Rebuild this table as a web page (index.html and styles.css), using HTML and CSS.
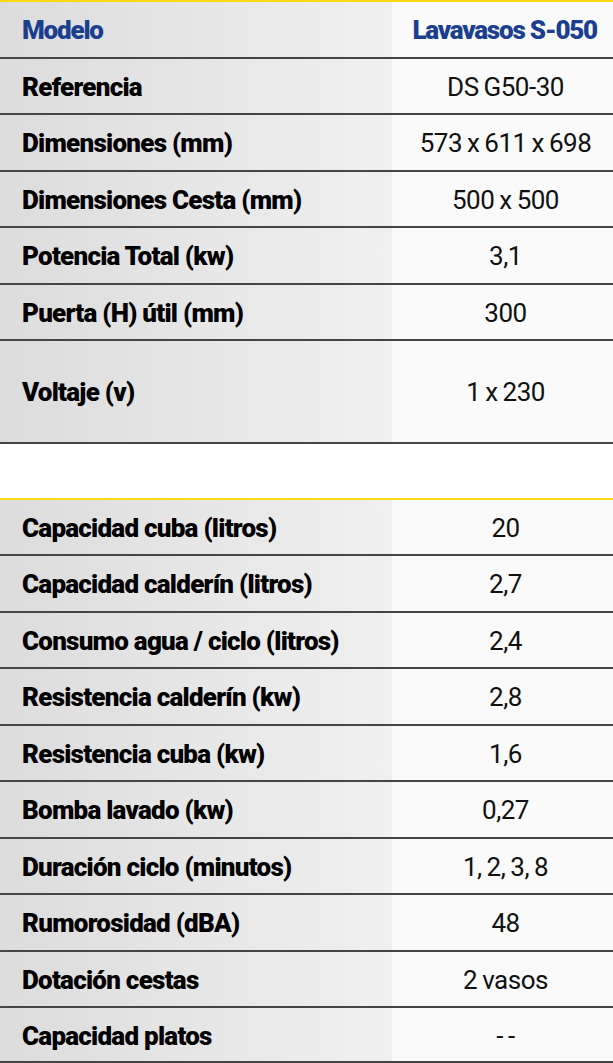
FILE: index.html
```html
<!DOCTYPE html>
<html lang="es">
<head>
<meta charset="utf-8">
<title>Lavavasos S-050</title>
<link rel="stylesheet" href="styles.css">
</head>
<body>
<div class="spec">
  <div class="row head yellow">
    <div class="label">Modelo</div>
    <div class="value">Lavavasos S-050</div>
  </div>
  <div class="row">
    <div class="label">Referencia</div>
    <div class="value">DS G50-30</div>
  </div>
  <div class="row">
    <div class="label">Dimensiones (mm)</div>
    <div class="value">573 x 611 x 698</div>
  </div>
  <div class="row">
    <div class="label">Dimensiones Cesta (mm)</div>
    <div class="value">500 x 500</div>
  </div>
  <div class="row">
    <div class="label">Potencia Total (kw)</div>
    <div class="value">3,1</div>
  </div>
  <div class="row">
    <div class="label">Puerta (H) útil (mm)</div>
    <div class="value">300</div>
  </div>
  <div class="row tall">
    <div class="label">Voltaje (v)</div>
    <div class="value">1 x 230</div>
  </div>
  <div class="row blank"></div>
  <div class="row yellow">
    <div class="label">Capacidad cuba (litros)</div>
    <div class="value">20</div>
  </div>
  <div class="row">
    <div class="label">Capacidad calderín (litros)</div>
    <div class="value">2,7</div>
  </div>
  <div class="row">
    <div class="label">Consumo agua / ciclo (litros)</div>
    <div class="value">2,4</div>
  </div>
  <div class="row">
    <div class="label">Resistencia calderín (kw)</div>
    <div class="value">2,8</div>
  </div>
  <div class="row">
    <div class="label">Resistencia cuba (kw)</div>
    <div class="value">1,6</div>
  </div>
  <div class="row">
    <div class="label">Bomba lavado (kw)</div>
    <div class="value">0,27</div>
  </div>
  <div class="row">
    <div class="label">Duración ciclo (minutos)</div>
    <div class="value">1, 2, 3, 8</div>
  </div>
  <div class="row">
    <div class="label">Rumorosidad (dBA)</div>
    <div class="value">48</div>
  </div>
  <div class="row">
    <div class="label">Dotación cestas</div>
    <div class="value">2 vasos</div>
  </div>
  <div class="row last">
    <div class="label">Capacidad platos</div>
    <div class="value">- -</div>
  </div>
</div>
</body>
</html>
```

FILE: styles.css
```css
html, body {
  margin: 0;
  padding: 0;
  background: #ffffff;
}

.spec {
  width: 613px;
  font-family: Roboto, "Liberation Sans", sans-serif;
}

.row {
  display: flex;
  height: 54.5px;
  border-top: 2px solid #454545;
}

.row.yellow {
  border-top-color: #fbd914;
}

.row.tall {
  height: 100.5px;
}

.row.blank {
  height: 54px;
  background: #ffffff;
}

.row.last {
  border-bottom: 2px solid #454545;
  height: 53px;
}

.label {
  width: 392px;
  flex: none;
  box-sizing: border-box;
  padding-left: 22px;
  padding-top: 2px;
  display: flex;
  align-items: center;
  background: linear-gradient(to right, #dcdcdc, #f0f0f0);
  font-weight: 900;
  font-size: 26px;
  letter-spacing: -0.75px;
  color: #000000;
}

.value {
  flex: 1;
  display: flex;
  align-items: center;
  justify-content: center;
  background: #fafafa;
  font-weight: 400;
  font-size: 26px;
  letter-spacing: -0.5px;
  word-spacing: -1px;
  color: #111111;
  padding-left: 6px;
  padding-top: 2px;
}

.head .label,
.head .value {
  color: #1b3f8f;
  font-weight: 900;
  font-size: 26px;
  letter-spacing: -1.2px;
  word-spacing: 0;
}

.head .value {
  justify-content: flex-end;
  padding-right: 16px;
  padding-left: 0;
}
```
